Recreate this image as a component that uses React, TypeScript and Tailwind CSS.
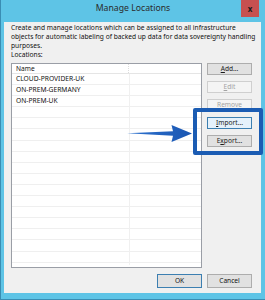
import React from 'react'

const font = { fontFamily: '"Noto Sans", "Liberation Sans", sans-serif' }

const rows = ['CLOUD-PROVIDER-UK', 'ON-PREM-GERMANY', 'ON-PREM-UK']

function Btn({ label, u, rest, kind = 'normal' }: { label?: string; u: string; rest: string; kind?: 'normal' | 'disabled' | 'hover' | 'default' }) {
    const styles: Record<string, string> = {
        normal: 'bg-[#e1e1e1] border-[#adadad] text-[#1a1a1a]',
        disabled: 'bg-[#f4f4f4] border-[#cfcfcf] text-[#a3a3a3]',
        hover: 'bg-[#e5f1fb] border-[#3c7fb1] text-[#1a1a1a]',
        default: 'bg-[#e1e1e1] border-[#3c7fb1] text-[#1a1a1a]',
    }
    return (
        <div className={`h-[12px] w-[45px] border flex items-center justify-center text-[6.6px] leading-none ${styles[kind]}`}>
            <span>
                {label}
                <span className="underline">{u}</span>
                {rest}
            </span>
        </div>
    )
}

export default function App() {
    return (
        <div className="relative w-[265px] h-[300px] bg-[#5ec4e6] border-l border-b border-[#3a8db3] flex flex-col" style={font}>
            {/* title bar */}
            <div className="h-[22px] flex items-center justify-center text-[8.7px] text-[#2b2b2b] pb-[5px]">
                Manage Locations
                <div className="absolute right-[6px] top-0 w-[18px] h-[17px] bg-[#c75050] flex items-center justify-center text-[8px] font-bold text-[#1a1a1a] leading-none">
                    x
                </div>
            </div>

            {/* content */}
            <div className="ml-[3px] w-[257px] h-[271px] bg-[#f0f0f0] pl-[7px] pr-[9px] flex flex-col text-[#111]">
                <p className="text-[6.65px] leading-[9px] pt-[0.5px] whitespace-nowrap">
                    Create and manage locations which can be assigned to all infrastructure
                    <br />
                    objects for automatic labeling of backed up data for data sovereignty handling
                    <br />
                    purposes.
                </p>
                <div className="text-[6.65px] leading-[9px]">Locations:</div>

                <div className="flex gap-[5px] mt-[4.5px]">
                    <div className="w-[191px] h-[205px] bg-white border border-[#9a9ea6] overflow-hidden relative">
                        <div className="absolute left-[117px] top-[10px] bottom-[2px] w-px bg-[#f0f0f0]" />
                        <div className="h-[10px] flex items-center border-b border-[#e5e5e5] text-[6.6px]">
                            <div className="w-[117px] pl-[4px] border-r border-dotted border-[#dcdcdc] h-full flex items-center">Name</div>
                        </div>
                        {Array.from({ length: 18 }).map((_, i) => (
                            <div key={i} className="h-[11.1px] border-b border-[#efefef] flex items-center pl-[4px] text-[6.7px] leading-none">
                                {rows[i] ?? ''}
                            </div>
                        ))}
                    </div>

                    <div className="flex flex-col gap-[6px]">
                        <Btn u="A" rest="dd..." />
                        <Btn u="E" rest="dit" kind="disabled" />
                        <Btn u="R" rest="emove" kind="disabled" />
                        <Btn u="I" rest="mport..." kind="hover" />
                        <Btn label="E" u="x" rest="port..." />
                    </div>
                </div>

                <div className="flex justify-end gap-[5px] mt-[6px]">
                    <div className="h-[14px] w-[45px] border border-[#3c7fb1] bg-[#e1e1e1] flex items-center justify-center text-[6.6px]">OK</div>
                    <div className="h-[14px] w-[45px] border border-[#adadad] bg-[#e1e1e1] flex items-center justify-center text-[6.6px]">Cancel</div>
                </div>
            </div>

            {/* annotation */}
            <div className="absolute left-[192px] top-[108px] w-[70px] h-[47px] border-[4px] border-[#1b5cb3] rounded-[2px]" />
            <svg className="absolute left-[126px] top-[122px]" width="68" height="22" viewBox="0 0 68 22">
                <defs>
                    <linearGradient id="ag" x1="0" x2="1" y1="0" y2="0">
                        <stop offset="0" stopColor="#2d72cf" />
                        <stop offset="1" stopColor="#1a56b2" />
                    </linearGradient>
                </defs>
                <path d="M0 11.2 L46 9.2 L44.5 3 L65 11.5 L44.5 20 L46 13.8 Z" fill="url(#ag)" />
            </svg>
        </div>
    )
}
